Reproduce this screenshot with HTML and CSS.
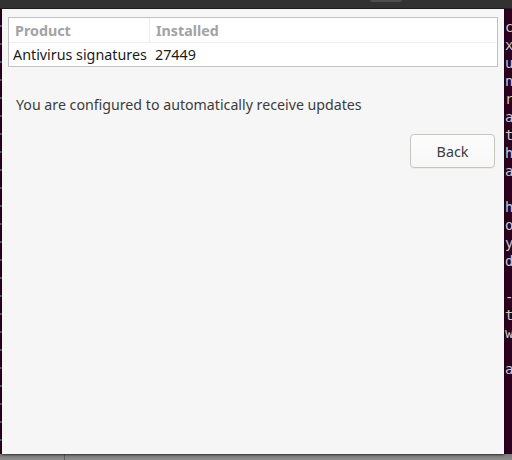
FILE: index.html
```html
<!DOCTYPE html>
<html>
<head>
<meta charset="utf-8">
<link rel="stylesheet" href="styles.css">
</head>
<body>
<div class="screen">
  <div class="topbar"><span class="tab"></span></div>
  <div class="middle">
    <div class="left-strip"></div>
    <div class="dialog">
      <div class="table">
        <div class="row header">
          <div class="cell c1">Product</div>
          <div class="cell c2">Installed</div>
        </div>
        <div class="row body-row">
          <div class="cell c1">Antivirus signatures</div>
          <div class="cell c2">27449</div>
        </div>
      </div>
      <p class="message">You are configured to automatically receive updates</p>
      <div class="actions">
        <button class="btn">Back</button>
      </div>
    </div>
    <div class="terminal">
      <div>c</div><div>x</div><div>u</div><div>n</div><div>r</div><div>a</div><div>t</div><div>h</div><div>a</div><div>&nbsp;</div>
      <div>h</div><div>o</div><div>y</div><div>d</div><div>&nbsp;</div><div>-</div><div>t</div><div>w</div><div>&nbsp;</div><div>a</div>
    </div>
  </div>
  <div class="bottom"><span class="divider"></span></div>
</div>
</body>
</html>
```
FILE: styles.css
```css
* { box-sizing: border-box; }
html, body { margin: 0; padding: 0; }
body {
  width: 512px;
  height: 460px;
  overflow: hidden;
  background: #2c001e;
  font-family: "Noto Sans", "Open Sans", sans-serif;
}
.screen {
  width: 512px;
  height: 460px;
  display: flex;
  flex-direction: column;
}
.topbar {
  height: 9px;
  background: #323232;
  border-bottom: 1px solid #1e1e1e;
  position: relative;
  flex: none;
}
.tab {
  position: absolute;
  left: 370px;
  top: 0;
  width: 32px;
  height: 2px;
  background: #4e4e4e;
  border-radius: 0 0 2px 2px;
}
.middle {
  height: 445px;
  display: flex;
  flex: none;
}
.left-strip {
  width: 2px;
  background: repeating-linear-gradient(to bottom, #2c001e 0, #2c001e 16px, #4a5f80 16px, #4a5f80 18px);
  flex: none;
}
.dialog {
  width: 502px;
  flex: none;
  background: #f6f6f6;
  padding: 8px 6px 0 6px;
  box-shadow: 0 1px 2px rgba(0,0,0,0.6);
  position: relative;
  z-index: 1;
  display: flex;
  flex-direction: column;
}
.table {
  width: 490px;
  background: #fff;
  border: 1px solid #c2c2c2;
}
.row {
  display: flex;
}
.header {
  height: 25px;
  border-bottom: 1px solid #efefef;
}
.body-row {
  height: 23px;
}
.cell {
  display: flex;
  align-items: center;
  font-size: 14.3px;
  color: #1a1a1a;
}
.header .cell {
  font-weight: 700;
  color: #a3a3a3;
}
.c1 {
  width: 141px;
  flex: none;
}
.header .c1 {
  padding-left: 6px;
  border-right: 1px solid #ececec;
}
.body-row .c1 {
  padding-left: 4px;
}
.header .c2 { padding-left: 6px; }
.body-row .c2 { padding-left: 5px; }
.message {
  margin: 28px 0 0 8px;
  font-size: 14.2px;
  line-height: 20px;
  color: #3c3c3c;
}
.actions {
  display: flex;
  justify-content: flex-end;
  margin-top: 19px;
  padding-right: 3px;
}
.btn {
  width: 85px;
  height: 34px;
  border: 1px solid #c8c4c0;
  border-radius: 4px;
  background: linear-gradient(#fdfdfd, #f7f7f7);
  box-shadow: 0 1px 0 rgba(0,0,0,0.04);
  font-family: inherit;
  font-size: 14.3px;
  color: #3c3c3c;
  padding: 0;
}
.terminal {
  width: 8px;
  flex: none;
  padding: 9px 0 0 1px;
  font-family: "DejaVu Sans Mono", monospace;
  font-size: 14px;
  line-height: 18px;
  color: #c9cbc6;
  overflow: hidden;
}
.bottom {
  flex: 1;
  background: linear-gradient(#7a7a7a, #8e8e8e);
  position: relative;
}
.divider {
  position: absolute;
  left: 64px;
  top: 0;
  bottom: 0;
  width: 1px;
  background: #5e5e5e;
}
```
